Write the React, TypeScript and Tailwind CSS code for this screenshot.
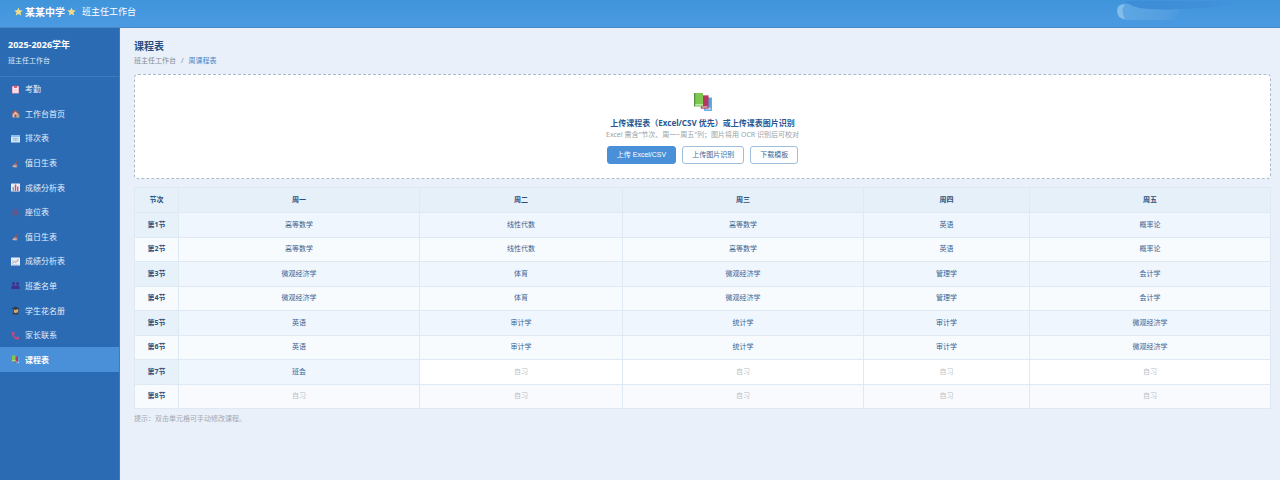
import type { ReactNode } from 'react';

const CJK = "font-['Noto_Sans','Noto_Sans_CJK_SC',sans-serif]";

type IconName =
  | 'clipboard' | 'house' | 'calendar' | 'broom' | 'bars' | 'chair'
  | 'line' | 'people' | 'graduate' | 'phone' | 'books';

const drawings: Record<IconName, ReactNode> = {
  clipboard: (
    <>
      <rect x="2" y="2" width="14" height="15" rx="1" fill="#e2a3b6" />
      <rect x="3.5" y="3.5" width="11" height="12" fill="#fbe9f1" />
      <rect x="6" y="1" width="6" height="5" rx="1" fill="#d4607a" />
      <path d="M6 9h6M6 12h6" stroke="#e7b3c5" strokeWidth="1" />
    </>
  ),
  house: (
    <>
      <path d="M3 9v8h12V9L9 4z" fill="#dcc0b8" />
      <path d="M1 10 8 2l9 8-2 1-6-6-6 6z" fill="#c9573f" />
      <path d="M7 11h4v6H7z" fill="#9a5548" />
      <path d="M11 13c1-3 6-3 6 0v4h-6z" fill="#a9a58e" />
    </>
  ),
  calendar: (
    <>
      <rect x="0" y="2" width="18" height="15" rx="1" fill="#d6e9fa" />
      <rect x="0" y="2" width="18" height="4" fill="#8bbdec" />
      <path d="M3 9h12M3 12h12M6 7v8M9 7v8M12 7v8" stroke="#8fb0d6" strokeWidth="1" />
    </>
  ),
  broom: (
    <>
      <path d="M14 3 9 10" stroke="#a8503e" strokeWidth="2" />
      <path d="m8 9 5 3-2 5-9-1z" fill="#cbaaa6" />
      <path d="m8 9 5 3-1 2-6-3z" fill="#a5617a" />
    </>
  ),
  bars: (
    <>
      <rect x="0" y="1" width="18" height="16" rx="1" fill="#e9eef6" />
      <path d="M3 8h3v8H3z" fill="#7fa8b8" />
      <path d="M7.500 3h3v13h-3z" fill="#d0556b" />
      <path d="M12 7h3v9h-3z" fill="#c2667c" />
    </>
  ),
  chair: (
    <path d="M4 2h10v7h1v8h-2v-4H5v4H3V9h1zM6 4v1h6V4zm0 3v1h6V7z" fill="#75507a" fillRule="evenodd" />
  ),
  line: (
    <>
      <rect x="0" y="1" width="18" height="16" rx="1" fill="#e9eef6" />
      <path d="M3 4v11h12M3 8h12" stroke="#b7c5d8" strokeWidth="1" fill="none" />
      <path d="m3 13 4-4 3 2 5-7" stroke="#b8808f" strokeWidth="1.500" fill="none" />
    </>
  ),
  people: (
    <g fill="#41318c">
      <circle cx="5" cy="5" r="3" />
      <circle cx="13" cy="5" r="3" />
      <path d="M1 16V11q0-2 2-2h4q2 0 2 2 0-2 2-2h4q2 0 2 2v5z" />
    </g>
  ),
  graduate: (
    <>
      <path d="M3 17v-3q6-4 12 0v3z" fill="#3a3f4c" />
      <path d="M5 5h9v5q-1 4-4.500 4T5 10z" fill="#d9b26c" />
      <path d="m1 5 8-4 8 4-8 3z" fill="#353a46" />
      <path d="M4 6v6l2 1V7zM14 7v4l1 1V6z" fill="#5a4236" />
    </>
  ),
  phone: (
    <path d="M3 2q2-1 3 1l1 3-2 2q2 4 6 5l2-2 3 2q1 1 0 2-2 3-6 1Q3 12 2 5q0-2 1-3z" fill="#d4447d" stroke="#d4447d" strokeWidth="1" />
  ),
  books: (
    <>
      <path d="M10 5h7v12h-7z" fill="#55a2df" />
      <path d="M11 14h5v2h-5z" fill="#b9def5" />
      <path d="M7 3h7v12H7z" fill="#b23a62" />
      <path d="M8 13h5v1H8z" fill="#f0ccd6" />
      <path d="M1 1h8v12H2L1 12z" fill="#80c653" />
      <path d="M1 1h1v12H1z" fill="#4b8e3b" />
      <path d="M2 11h7v1H2z" fill="#daf0c8" />
    </>
  ),
};

function Icon({ name, className }: { name: IconName; className: string }) {
  return (
    <svg viewBox="0 0 18 18" className={className} aria-hidden="true">
      {drawings[name]}
    </svg>
  );
}

function Star() {
  return (
    <svg viewBox="0 0 20 20" className="size-[9px] shrink-0" aria-hidden="true">
      <path d="m10 1 2.700 6.200 6.800.6-5.100 4.500 1.500 6.700L10 15.500 4.100 19l1.500-6.700L.5 7.800l6.800-.6z" fill="#f0dc86" />
    </svg>
  );
}

const menu: { icon: IconName; label: string }[] = [
  { icon: 'clipboard', label: '考勤' },
  { icon: 'house', label: '工作台首页' },
  { icon: 'calendar', label: '排次表' },
  { icon: 'broom', label: '值日生表' },
  { icon: 'bars', label: '成绩分析表' },
  { icon: 'chair', label: '座位表' },
  { icon: 'broom', label: '值日生表' },
  { icon: 'line', label: '成绩分析表' },
  { icon: 'people', label: '班委名单' },
  { icon: 'graduate', label: '学生花名册' },
  { icon: 'phone', label: '家长联系' },
  { icon: 'books', label: '课程表' },
];

const FREE = '自习';
const days = ['周一', '周二', '周三', '周四', '周五'];
const lessons = [
  ['高等数学', '线性代数', '高等数学', '英语', '概率论'],
  ['高等数学', '线性代数', '高等数学', '英语', '概率论'],
  ['微观经济学', '体育', '微观经济学', '管理学', '会计学'],
  ['微观经济学', '体育', '微观经济学', '管理学', '会计学'],
  ['英语', '审计学', '统计学', '审计学', '微观经济学'],
  ['英语', '审计学', '统计学', '审计学', '微观经济学'],
  ['班会', FREE, FREE, FREE, FREE],
  [FREE, FREE, FREE, FREE, FREE],
];

function cellStyle(row: number, text: string) {
  if (text === FREE) return row % 2 === 0 ? 'bg-white text-[#b9bfc8]' : 'bg-[#f8fafd] text-[#b9bfc8]';
  return row % 2 === 0 ? 'bg-[#eff6fe] text-[#3a618f]' : 'bg-[#f7fbfe] text-[#3a618f]';
}

function Header() {
  return (
    <header className="flex h-7 items-center justify-between border-b border-[#4b8ac8] bg-linear-to-b from-[#4095da] to-[#4a9ae2] pb-1 pl-[14px] text-white">
      <div className="flex items-center gap-[6px]">
        <strong className="flex items-center gap-[2px] text-[10px] leading-4">
          <Star />
          某某中学
          <Star />
        </strong>
        <span className="text-[9px] leading-4">班主任工作台</span>
      </div>
      <svg viewBox="0 0 164 22" className="h-[22px] w-[164px]" aria-hidden="true">
        <defs>
          <linearGradient id="pill" x1="0" x2="1">
            <stop offset="0" stopColor="#5fa8e4" />
            <stop offset=".65" stopColor="#559fe0" />
            <stop offset="1" stopColor="#4798df" />
          </linearGradient>
          <linearGradient id="shade" x1="0" x2="1">
            <stop offset="0" stopColor="#3d8cd5" />
            <stop offset=".6" stopColor="#3f90d9" />
            <stop offset="1" stopColor="#4396dc" />
          </linearGradient>
        </defs>
        <path d="M10 3h60q-8 10-12 16H10a8 8 0 0 1 0-16z" fill="url(#pill)" />
        <path d="M9 3q-5 7 0 15-8-1-8-8t8-7z" fill="#82bdeb" />
        <path d="M10 0h134q-12 4-35 4-14 4-29 3-10 2-20 1-12 1-22 0Q16 8 10 0z" fill="url(#shade)" />
      </svg>
    </header>
  );
}

function Sidebar() {
  return (
    <aside className="w-[120px] shrink-0 border-r border-[#3e7cc2] bg-[#2b6bb4] text-white">
      <div className="flex h-[49px] flex-col gap-1 border-b border-[#3d79bd] px-2 pt-[11px]">
        <strong className="text-[9px] leading-3">2025-2026学年</strong>
        <span className="text-[7px] leading-3 text-[#dce9f7]">班主任工作台</span>
      </div>
      <nav>
        <ul className="grid min-h-[295px] auto-rows-fr">
          {menu.map((item, i) => {
            const active = i === menu.length - 1;
            return (
              <li key={i} className="grid">
                <a
                  href="#"
                  aria-current={active ? 'page' : undefined}
                  className={`flex items-center gap-[5px] pl-[11px] text-[8px] leading-3 ${
                    active ? 'bg-[#4a90d9] font-bold text-white' : 'text-[#e3eefa]'
                  }`}
                >
                  <Icon name={item.icon} className="size-[9px] shrink-0" />
                  {item.label}
                </a>
              </li>
            );
          })}
        </ul>
      </nav>
    </aside>
  );
}

function UploadPanel() {
  return (
    <section className="mt-[7px] flex flex-col items-center rounded border border-dashed border-[#aab9cf] bg-white pt-[17px] pb-[14px]">
      <Icon name="books" className="size-5" />
      <h2 className="mt-1 text-[8px] leading-[13px] font-bold text-[#2a568f]">
        上传课程表（Excel/CSV 优先）或上传课表图片识别
      </h2>
      <p className="text-[7px] leading-3 text-[#999fa8]">
        Excel 需含"节次、周一~周五"列；图片将用 OCR 识别后可校对
      </p>
      <div className="mt-[5px] flex gap-[6px] font-['Liberation_Sans','Noto_Sans_CJK_SC',sans-serif] text-[7px] leading-4">
        <button type="button" className="rounded-[3px] border border-[#4a90d9] bg-[#4a90d9] px-[9px] text-white">
          上传 Excel/CSV
        </button>
        <button type="button" className="rounded-[3px] border border-[#9fbddd] bg-white px-[9px] text-[#3d6594]">
          上传图片识别
        </button>
        <button type="button" className="rounded-[3px] border border-[#9fbddd] bg-white px-[9px] text-[#3d6594]">
          下载模板
        </button>
      </div>
    </section>
  );
}

function Timetable() {
  return (
    <table className="mt-2 h-[222px] w-full table-fixed border-collapse text-center text-[7px] leading-3 [&_td]:border [&_td]:border-[#dfe9f3] [&_th]:border [&_th]:border-[#dfe9f3]">
      <colgroup>
        <col className="w-[44px]" />
        <col className="w-[21.2%]" />
        <col className="w-[17.9%]" />
        <col className="w-[21.2%]" />
        <col className="w-[14.6%]" />
        <col />
      </colgroup>
      <thead>
        <tr className="h-[25px] bg-[#e5f0f9] text-[#2a4f7d]">
          <th scope="col">节次</th>
          {days.map((day) => (
            <th key={day} scope="col">{day}</th>
          ))}
        </tr>
      </thead>
      <tbody>
        {lessons.map((row, r) => (
          <tr key={r}>
            <th scope="row" className={`text-[#2a4f7d] ${r % 2 === 0 ? 'bg-[#e7f1fa]' : 'bg-[#f7fbfe]'}`}>
              第{r + 1}节
            </th>
            {row.map((text, c) => (
              <td key={c} className={cellStyle(r, text)}>{text}</td>
            ))}
          </tr>
        ))}
      </tbody>
    </table>
  );
}

export default function App() {
  return (
    <div className={`flex min-h-screen flex-col bg-[#e9f0fa] ${CJK}`} lang="zh-CN">
      <Header />
      <div className="flex flex-1">
        <Sidebar />
        <main className="min-w-0 flex-1 pt-[11px] pr-[9px] pl-[14px]">
          <h1 className="text-[10px] leading-[14px] font-bold text-[#26507f]">课程表</h1>
          <nav aria-label="面包屑" className="mt-[2px] flex gap-[5px] text-[7px] leading-3 text-[#858b94]">
            <a href="#">班主任工作台</a>
            <span>/</span>
            <a href="#" className="text-[#4a86c8]">周课程表</a>
          </nav>
          <UploadPanel />
          <Timetable />
          <p className="mt-1 text-[7px] leading-3 text-[#a3a9b1]">提示：双击单元格可手动修改课程。</p>
        </main>
      </div>
    </div>
  );
}
